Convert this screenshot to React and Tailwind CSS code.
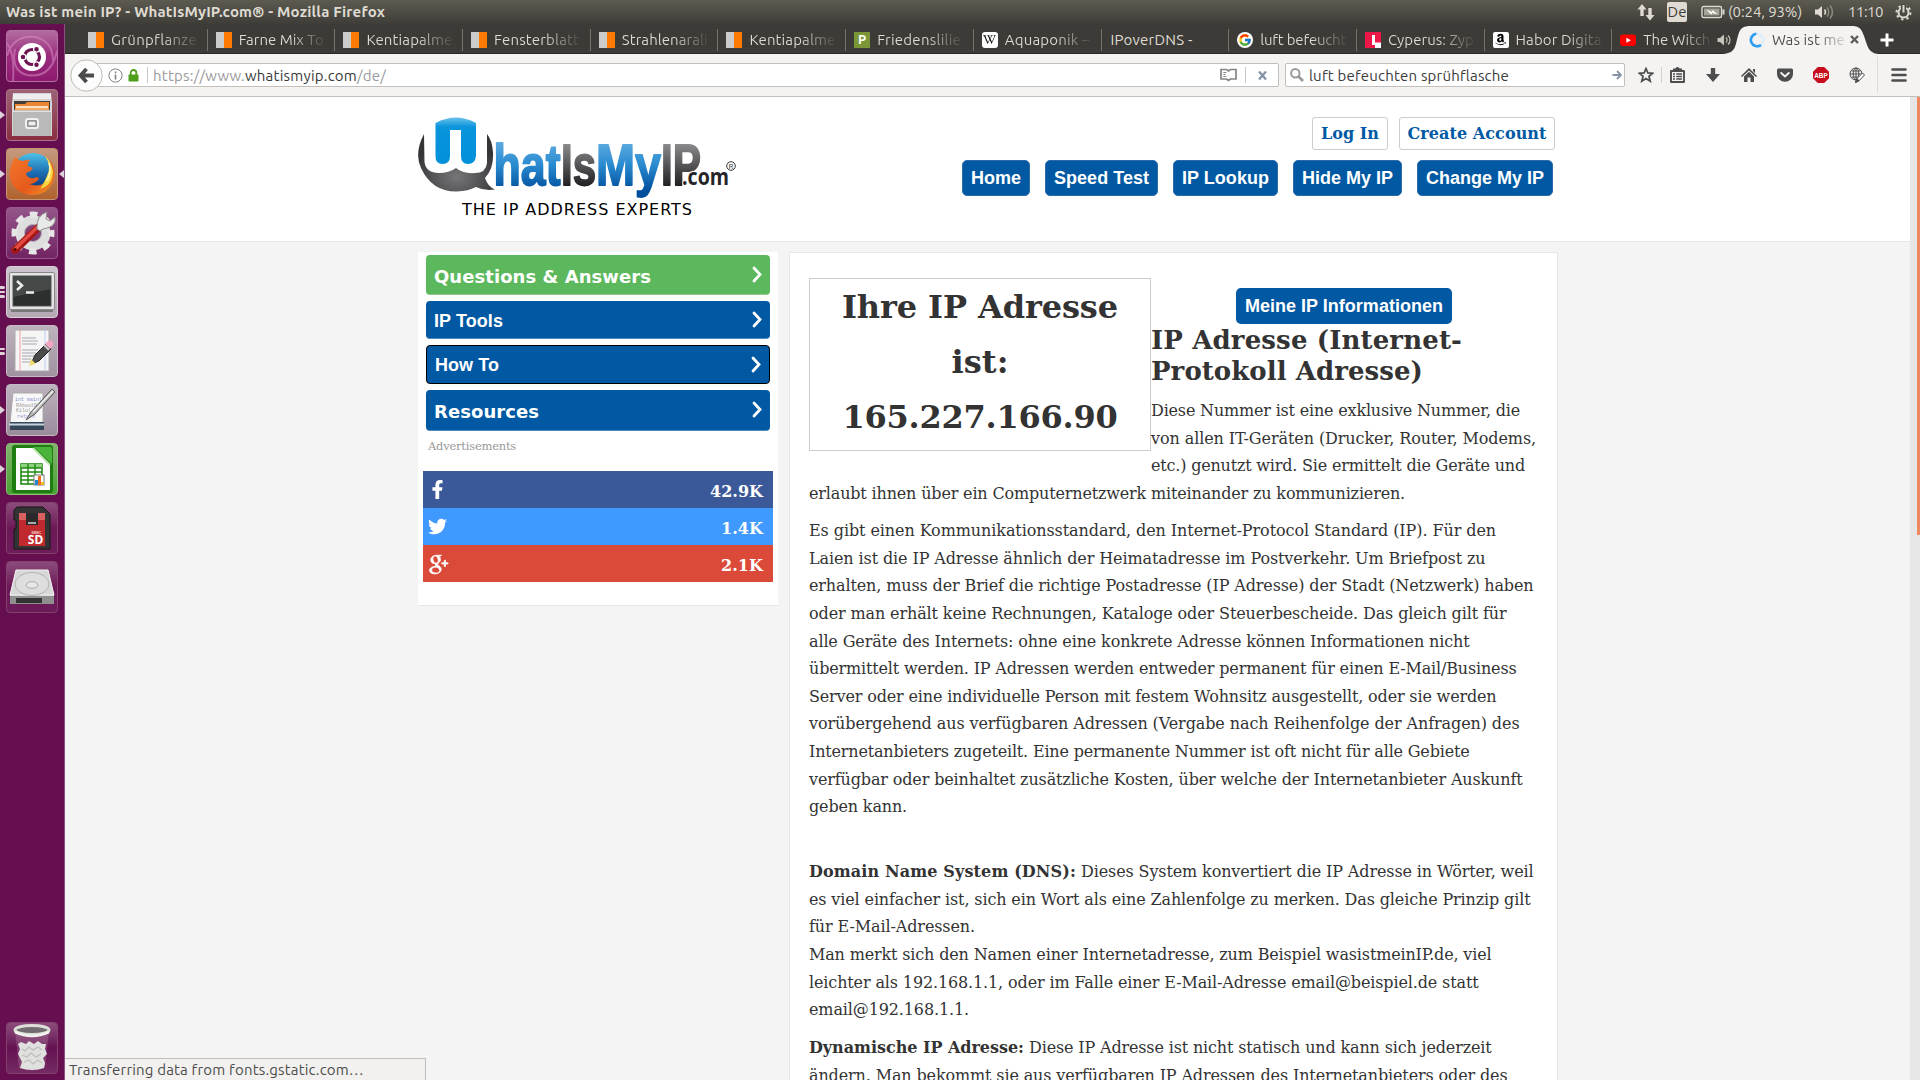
import React, { useRef, useLayoutEffect } from 'react';
import { FaFacebookF, FaTwitter, FaAmazon, FaWikipediaW } from 'react-icons/fa';
import { FcGoogle } from 'react-icons/fc';
import { TiSocialGooglePlus } from 'react-icons/ti';

const UBUNTU = "font-['Ubuntu','Noto_Sans',sans-serif]";
const SERIF = "font-['DejaVu_Serif',serif]";
const SANS = "font-['Liberation_Sans',sans-serif]";
const DEJAVU = "font-['DejaVu_Sans',sans-serif]";

/* Sets a single line of text to the given width by adjusting its tracking. */
function Fit({ w, className = '', children }) {
  const ref = useRef(null);
  useLayoutEffect(() => {
    const el = ref.current;
    el.style.letterSpacing = '0px';
    const natural = el.getBoundingClientRect().width;
    el.style.letterSpacing = `${(w - natural) / el.textContent.length}px`;
  }, [w]);
  return (
    <span ref={ref} className={`inline-block whitespace-nowrap ${className}`}>
      {children}
    </span>
  );
}

function Lines({ rows, className = '' }) {
  return (
    <p className={className}>
      {rows.map(([w, text, bold, boldWidth]) => (
        <span key={text} className="flex h-[27.65px]">
          {bold && <Fit w={boldWidth} className="mr-[5px] font-bold">{bold}</Fit>}
          <Fit w={bold ? w - boldWidth - 5 : w}>{text}</Fit>
        </span>
      ))}
    </p>
  );
}

/* ---------- top panel ---------- */
function TopPanel() {
  return (
    <header className={`flex h-6 items-center justify-between bg-linear-to-b from-[#5d5b50] to-[#3e3d38] pl-1.5 pr-2 text-[15px] leading-6 text-[#dfdbd2] ${UBUNTU}`}>
      <Fit w={379} className="font-bold">Was ist mein IP? - WhatIsMyIP.com® - Mozilla Firefox</Fit>
      <div className="flex items-center">
        <svg width="18" height="20" viewBox="0 0 18 20" fill="#dfdbd2" className="mr-[12px]">
          <path d="M5 2 L9.500 7.500 H6.700 V14 H3.300 V7.500 H0.500z M13 18.500 L8.500 13 H11.300 V6 H14.700 V13 H17.500z" />
        </svg>
        <span className="mr-[14px] flex h-5 w-5 items-center justify-center rounded-[2px] bg-[#dfdbd2] text-[15px] text-[#3c3b37]">De</span>
        <svg width="24" height="14" viewBox="0 0 24 14" className="mr-[3px]">
          <rect x="1" y="1.5" width="19.5" height="11" rx="1.5" fill="none" stroke="#dfdbd2" strokeWidth="1.4" />
          <rect x="3" y="3.5" width="15.5" height="7" fill="#a5a297" />
          <rect x="21.5" y="4.5" width="2" height="5" fill="#dfdbd2" />
          <path d="M5 4.5 L11 7 L11.5 5 L17 9.5 L11 7.8 L10.5 9.8z" fill="#fff" />
        </svg>
        <Fit w={74} className="mr-3">(0:24, 93%)</Fit>
        <svg width="22" height="16" viewBox="0 0 22 16" className="mr-3">
          <path d="M1 5.5 H4 L8 2 V14 L4 10.5 H1z" fill="#dfdbd2" />
          <path d="M10.5 5.5 a4 4 0 0 1 0 5" stroke="#dfdbd2" strokeWidth="1.5" fill="none" />
          <path d="M13 3.5 a7 7 0 0 1 0 9 M16 1.5 a10 10 0 0 1 0 13" stroke="#8f8c82" strokeWidth="1.5" fill="none" />
        </svg>
        <Fit w={35} className="mr-3">11:10</Fit>
        <svg width="17" height="17" viewBox="0 0 17 17" fill="none" stroke="#dfdbd2">
          <circle cx="8.5" cy="8.5" r="5" strokeWidth="2" />
          <circle cx="8.5" cy="8.5" r="7" strokeWidth="2" strokeDasharray="2.4 3.1" />
          <path d="M8.5 0 V8" stroke="#4a4943" strokeWidth="5" />
          <path d="M8.5 1 V8.5" strokeWidth="2" />
        </svg>
      </div>
    </header>
  );
}

/* ---------- tabs ---------- */
const Split = () => (
  <span className="flex h-4 w-4 shrink-0"><i className="w-2 bg-[#cbcbcb]" /><i className="w-2 bg-[#ff7a00]" /></span>
);
const P = () => <span className="flex h-4 w-4 shrink-0 items-center justify-center bg-[#7b9636] text-[13px] font-bold text-white">P</span>;
const Wiki = () => <span className="flex h-4 w-4 shrink-0 items-center justify-center rounded-[3px] bg-white text-black"><FaWikipediaW size={13} /></span>;
const Goog = () => <span className="flex h-4 w-4 shrink-0 items-center justify-center rounded-full bg-white"><FcGoogle size={14} /></span>;
const Ell = () => (
  <svg width="16" height="16" className="shrink-0"><rect width="16" height="16" fill="#ed1748" /><path d="M7 3 h3 v7.500 h6 V16 h-6 v-3 H7z" fill="#fff" /></svg>
);
const Amz = () => <span className="flex h-4 w-4 shrink-0 items-center justify-center rounded-[2px] bg-white text-black"><FaAmazon size={13} /></span>;
const Yt = () => (
  <svg width="16" height="16" className="shrink-0"><rect y="2.5" width="16" height="11.5" rx="3" fill="#f00" /><path d="M6.3 5.7 L11 8.2 L6.3 10.8z" fill="#fff" /></svg>
);

const TABS = [
  [Split, 'Grünpflanze', 86], [Split, 'Farne Mix To', 85], [Split, 'Kentiapalme', 86], [Split, 'Fensterblatt', 85],
  [Split, 'Strahlenarali', 86], [Split, 'Kentiapalme', 86], [P, 'Friedenslilie', 84], [Wiki, 'Aquaponik –', 85],
  [null, 'IPoverDNS -', 82], [Goog, 'luft befeucht', 86], [Ell, 'Cyperus: Zyp', 86], [Amz, 'Habor Digita', 86], [Yt, 'The Witch', 67],
];

function TabBar() {
  return (
    <div className={`flex h-[30px] border-b border-[#2a2925] bg-[#3c3b37] pl-[15px] text-[15px] text-[#dfdbd2] ${UBUNTU}`}>
      {TABS.map(([Icon, label, w], i) => (
        <div key={i} className="flex h-[29px] w-[127.7px] shrink-0 items-center pl-[8px] pt-[2px]">
          {Icon && <Icon />}
          <span className={Icon ? 'ml-[7px] w-[86px] overflow-hidden leading-[22px]' : 'ml-px w-[100px] overflow-hidden leading-[22px]'}>
            <Fit
              w={w}
              className={label === 'IPoverDNS -' ? '' : 'bg-linear-to-r from-[#dfdbd2] from-60% to-[#4a4944] bg-clip-text text-transparent'}
            >
              {label}
            </Fit>
          </span>
          {i < 12 && <i className="ml-auto h-[22px] w-px bg-[#76746c]" />}
          {i === 12 && (
            <svg width="15" height="14" viewBox="0 0 15 14" className="-ml-[12px] shrink-0">
              <path d="M0.5 5 H3 L7 1.5 V12.5 L3 9 H0.5z" fill="#c8c4bb" />
              <path d="M9 4.5 a3.5 3.5 0 0 1 0 5 M11 2.5 a6 6 0 0 1 0 9" stroke="#c8c4bb" strokeWidth="1.2" fill="none" />
            </svg>
          )}
        </div>
      ))}
      <div className="relative -ml-[12px] flex h-[30px] w-[150px] shrink-0 items-center pl-[21px] pt-px text-[#4c4c4c]">
        <svg width="156" height="30" viewBox="0 0 156 30" className="absolute -left-[5px] top-0">
          <path d="M0 30 C13 29 12 22 15 12 C17 4 20 2 28 2 H128 C136 2 138 4 141 12 C145 23 145 29 156 30z" fill="#f4f3f2" />
        </svg>
        <svg width="16" height="16" viewBox="0 0 16 16" className="relative shrink-0" fill="none" strokeWidth="2.6">
          <circle cx="8" cy="8" r="6.3" stroke="#b9dbf7" />
          <path d="M8.500 1.700 A6.300 6.300 0 0 1 12 13" stroke="#e4f1fb" />
          <path d="M12 13 A6.300 6.300 0 1 1 7 1.800" stroke="#2f9df0" />
        </svg>
        <span className="relative ml-[7px] w-[73px] overflow-hidden leading-[22px]">
          <Fit w={73} className="bg-linear-to-r from-[#4c4c4c] from-60% to-[#dcdbda] bg-clip-text text-transparent">Was ist me</Fit>
        </span>
        <svg width="9" height="9" viewBox="0 0 9 9" className="relative ml-[5px]" stroke="#5c5c5c" strokeWidth="2.4"><path d="M1 1 L8 8 M8 1 L1 8" /></svg>
      </div>
      <svg width="14" height="14" viewBox="0 0 14 14" className="ml-[2px] mt-[9px] shrink-0" stroke="#fff" strokeWidth="3"><path d="M7 0.5 V13.5 M0.5 7 H13.5" /></svg>
    </div>
  );
}

/* ---------- navigation toolbar ---------- */
function Toolbar() {
  return (
    <div className={`flex h-[43px] items-center border-b border-[#c4bfb8] bg-[#f4f3f2] pl-[4px] text-[15px] ${UBUNTU}`}>
      <svg width="33" height="33" viewBox="0 0 33 33" className="relative z-10 ml-px shrink-0">
        <circle cx="16.5" cy="16.5" r="15.7" fill="#fcfcfc" stroke="#bdbab6" />
        <path d="M24 16.5 H12 M16.5 10 L10.500 16.500 L16.5 23" stroke="#4a4a4a" strokeWidth="3.800" fill="none" />
      </svg>
      <div className="-ml-[7px] flex h-6 w-[1183px] shrink-0 items-center rounded-r-[2px] border border-[#c3c0bb] bg-white pl-[11px] leading-[22px]">
        <svg width="15" height="15" viewBox="0 0 15 15" fill="none" stroke="#808080" className="shrink-0">
          <circle cx="7.5" cy="7.5" r="6.6" /><path d="M7.5 6.5 V11.5 M7.5 3.5 V5.2" strokeWidth="1.6" />
        </svg>
        <svg width="11" height="13" viewBox="0 0 11 13" className="ml-[5px] shrink-0">
          <rect x="0.5" y="5.5" width="10" height="7" rx="0.8" fill="#4f9e1c" />
          <path d="M2.7 6 V3.8 a2.8 2.8 0 0 1 5.6 0 V6" fill="none" stroke="#4f9e1c" strokeWidth="1.8" />
        </svg>
        <i className="ml-2 mr-[5px] h-4 w-px bg-[#c8c8c8]" />
        <Fit w={233} className="pt-px text-[#9a9a9a]">https://www.<span className="text-[#3a3a3a]">whatismyip.com</span>/de/</Fit>
        <div className="ml-auto flex items-center">
          <svg width="17" height="14" viewBox="0 0 17 14" fill="none" stroke="#858585" strokeWidth="1.7" className="mr-2">
            <path d="M1 1.5 H6.500 L8.5 3 L10.500 1.5 H16 V11 H10.5 L8.5 12.500 L6.5 11 H1z" /><path d="M3.300 4.500 h3 M3.300 6.500 h2.200 M3.300 8.500 h3 M8.500 11 v2" strokeWidth="1.1" />
          </svg>
          <i className="mr-3 h-4 w-px bg-[#c8c8c8]" />
          <svg width="9" height="9" viewBox="0 0 9 9" stroke="#8693a5" strokeWidth="2.3" className="mr-[11px]"><path d="M1 0.5 L8 8.5 M8 0.5 L1 8.5" /></svg>
        </div>
      </div>
      <div className="ml-[6px] flex h-6 w-[340px] shrink-0 items-center rounded-[2px] border border-[#c3c0bb] bg-white pl-[4px] leading-[22px] text-[#3a3a3a]">
        <svg width="14" height="14" viewBox="0 0 14 14" fill="none" stroke="#999" strokeWidth="2"><circle cx="5.3" cy="5.3" r="4.2" /><path d="M8.5 8.5 L13 13" strokeWidth="2.6" /></svg>
        <Fit w={200} className="ml-[5px] pt-px">luft befeuchten sprühflasche</Fit>
        <svg width="10" height="10" viewBox="0 0 10 10" fill="none" stroke="#8693a5" strokeWidth="1.8" className="ml-auto mr-[2px]"><path d="M0.5 5 H8 M5 1 L9 5 L5 9" /></svg>
      </div>
      <div className="ml-[13px] flex items-center text-[#4d4d4d]">
        <svg width="16" height="16" viewBox="0 0 16 16" fill="none" stroke="currentColor" strokeWidth="1.8"><path d="M8 1.6 L9.9 6 L14.6 6.3 L11 9.4 L12.2 14.2 L8 11.6 L3.8 14.2 L5 9.4 L1.4 6.3 L6.1 6z" /></svg>
        <i className="ml-[7px] mr-2 h-4 w-px bg-[#d2d0cc]" />
        <svg width="15" height="16" viewBox="0 0 15 16" fill="none" stroke="currentColor" strokeWidth="1.9"><path d="M1 4 H14 V15 H1z" strokeLinejoin="round" /><path d="M4 4 V2.500 H5.500 L7.500 0.800 L9.500 2.500 H11 V4" fill="currentColor" /><path d="M3 7 h2 M6.300 7 h5.700 M3 9.500 h2 M6.300 9.500 h5.700 M3 12 h2 M6.300 12 h5.700" strokeWidth="1.300" /></svg>
        <svg width="14" height="14" viewBox="0 0 14 14" fill="currentColor" className="ml-[21px]"><path d="M4.8 0 H9.2 V6 H14 L7 14 L0 6 H4.8z" /></svg>
        <svg width="16" height="14" viewBox="0 0 16 14" className="ml-[21px]" fill="currentColor"><path d="M8 0 L16 8 L15 9 L8 2.4 L1 9 L0 8z M3 8.5 L8 3.8 L13 8.5 V14 H9.5 V9.5 H6.5 V14 H3z M12 1 h2 v4 l-2 -2z" /></svg>
        <svg width="16" height="14" viewBox="0 0 16 14" className="ml-5"><path d="M1.5 0.5 H14.5 Q16 0.5 16 2 V6 A8 7.8 0 0 1 0 6 V2 Q0 .5 1.5 .5z" fill="currentColor" /><path d="M4.2 5 L8 8.5 L11.8 5" fill="none" stroke="#f4f3f2" strokeWidth="2" strokeLinecap="round" /></svg>
        <svg width="16" height="16" viewBox="0 0 16 16" className="ml-5"><path d="M4.8 0 H11.2 L16 4.8 V11.2 L11.2 16 H4.8 L0 11.2 V4.8z" fill="#c70d1e" /><text x="8" y="10.8" fontSize="7.5" fontWeight="bold" fill="#fff" textAnchor="middle" textLength="13.5" lengthAdjust="spacingAndGlyphs" fontFamily="Liberation Sans">ABP</text></svg>
        <svg width="16" height="16" viewBox="0 0 16 16" className="ml-5" fill="none" stroke="currentColor" strokeWidth="1"><circle cx="7" cy="7" r="6" /><ellipse cx="7" cy="7" rx="2.8" ry="6" /><path d="M1 7 H13 M2.500 4 H11.500 M2.5 10 H10 M7 1 V13" /><path d="M6.500 15.500 L8 11.5 L13.5 6 L15.5 8 L10 13.8z" fill="#fff" stroke="#4d4d4d" /><path d="M6.500 15.500 L8 11.500 L10 13.800z" fill="#4d4d4d" /></svg>
        <i className="ml-3 mr-[13px] h-9 w-px bg-[#dedcd9]" />
        <svg width="16" height="14" viewBox="0 0 16 14" stroke="currentColor" strokeWidth="2.6" strokeLinecap="round"><path d="M1.5 1.5 H14.5 M1.5 7 H14.5 M1.5 12.5 H14.5" /></svg>
      </div>
    </div>
  );
}

/* ---------- launcher ---------- */
const tileBase = 'relative flex h-[52px] w-[52px] shrink-0 items-center justify-center rounded-[4px] border bg-linear-to-b';

const DashIcon = () => (
  <svg width="50" height="50" viewBox="0 0 50 50">
    <path d="M0 25 Q6 4 28 6 Q46 10 46 30 M6 50 Q8 22 0 12 M50 20 Q44 48 20 44 Q4 40 8 18" stroke="#d88ac4" strokeWidth="2" fill="none" opacity=".55" />
    <circle cx="25" cy="26" r="14" fill="#fff" />
    <circle cx="25" cy="26" r="7.5" fill="none" stroke="#6d1252" strokeWidth="3.2" />
    <g fill="#6d1252" stroke="#fff" strokeWidth="1.3"><circle cx="16" cy="26" r="2.9" /><circle cx="29.5" cy="18.2" r="2.9" /><circle cx="29.5" cy="33.8" r="2.9" /></g>
  </svg>
);
const FilesIcon = () => (
  <svg width="42" height="44" viewBox="0 0 42 44">
    <path d="M2 0 H40 L41 10 V43 H1 V10z" fill="#d4d4d4" /><path d="M2 1 H40 V6 H2z" fill="#eee" />
    <rect x="3" y="8" width="36" height="12" fill="#403c38" /><path d="M4 16 V11 H14 L16 9 H38 V16z" fill="#e98533" /><path d="M5 14 H37" stroke="#fff" strokeWidth="1.5" /><path d="M4 16 H38" stroke="#f7a95d" strokeWidth="2" />
    <rect x="2" y="18" width="38" height="25" fill="#b9b9b9" /><path d="M2 18 H40" stroke="#ececec" strokeWidth="1.5" />
    <rect x="15" y="26" width="12" height="9" rx="2" fill="#b1b1b1" stroke="#f0f0f0" strokeWidth="2" /><rect x="17" y="28" width="8" height="5" fill="#eee" stroke="#777" />
  </svg>
);
const FirefoxIcon = () => (
  <svg width="46" height="46" viewBox="0 0 46 46">
    <defs>
      <linearGradient id="ffSea" x1="0" y1="0" x2="0" y2="1"><stop offset="0" stopColor="#4cc1e8" /><stop offset=".5" stopColor="#1b6cb2" /><stop offset="1" stopColor="#0d2b61" /></linearGradient>
      <linearGradient id="ffFox" x1="0" y1="0" x2="1" y2="1"><stop offset="0" stopColor="#f3762b" /><stop offset=".6" stopColor="#e65a1c" /><stop offset="1" stopColor="#f59a25" /></linearGradient>
    </defs>
    <circle cx="24" cy="22" r="20" fill="url(#ffSea)" />
    <path d="M6 6 Q9 9 14 10 Q18 8 21 9 Q18 12 19 15 L24 17 Q22 21 17 22 Q18 28 25 27 Q29 25 30 28 Q26 33 20 33 Q34 38 40 26 Q43 17 41 9 Q49 22 43 33 Q36 45 22 44 Q4 42 1 26 Q0 16 6 6z" fill="url(#ffFox)" />
    <path d="M36 5 Q43 15 38 25 Q34 34 31 38 Q44 34 44 20 Q42 10 36 5z" fill="#fbd63f" />
    <path d="M40 12 Q43 20 38 30" stroke="#fff4b0" strokeWidth="1.6" fill="none" />
  </svg>
);
const SettingsIcon = () => (
  <svg width="48" height="48" viewBox="0 0 48 48">
    <circle cx="25" cy="24" r="13" fill="none" stroke="#dedede" strokeWidth="9" />
    <circle cx="25" cy="24" r="18.500" fill="none" stroke="#e6e6e6" strokeWidth="6" strokeDasharray="7.500 7.030" strokeDashoffset="3.700" />
    <circle cx="25" cy="24" r="8.500" fill="none" stroke="#b0b0b0" strokeWidth="1" />
    <path d="M7 41 L31 18" stroke="#a81717" strokeWidth="7.500" strokeLinecap="round" /><path d="M7 40 L29 18.500" stroke="#e34a42" strokeWidth="3.500" strokeLinecap="round" />
    <path d="M29 20 Q28 6 39 3 L38 10 L42 12 L47 8 Q49 18 35 20 L32 22z" fill="#e9e9e9" stroke="#8a8a8a" />
    <circle cx="7" cy="40.5" r="1.6" fill="#4d0808" />
  </svg>
);
const TerminalIcon = () => (
  <svg width="46" height="40" viewBox="0 0 46 40">
    <rect x="0.5" y="0.5" width="45" height="37" rx="1.5" fill="#e4e4e4" stroke="#888" /><path d="M2 39 H44" stroke="#777" strokeWidth="2" />
    <rect x="4" y="4" width="38" height="30" fill="#2b2f2e" stroke="#555" /><path d="M4 4 H42 V17 L4 25z" fill="#454a48" />
    <path d="M8 9 L13 13.5 L8 18 M17 20.5 H25" stroke="#eee" strokeWidth="2.5" fill="none" />
  </svg>
);
const GeditIcon = () => (
  <svg width="46" height="46" viewBox="0 0 46 46">
    <rect x="6" y="2" width="34" height="41" fill="#f5f5f5" stroke="#aaa" />
    <path d="M11 2 V43" stroke="#f0a0a0" /><path d="M36 2 V43" stroke="#b9cdf0" />
    <path d="M13 10 H27 M13 13 H29 M13 16 H28 M13 22 H29 M13 25 H27 M13 28 H25 M13 31 H22 M13 34 H28" stroke="#a6a6b2" />
    <path d="M22 36 L26 27 L37 16 L42 21 L30 33z" fill="#4b4b4b" stroke="#222" /><path d="M20 38 L22 31 L27 36z" fill="#f0dc76" /><path d="M36 16 L40 12 Q46 13 44 18 L41 21z" fill="#f3a5c4" /><path d="M35 17 L40 22" stroke="#ccc" strokeWidth="2" />
  </svg>
);
const TexIcon = () => (
  <svg width="50" height="46" viewBox="0 0 50 46">
    <path d="M6 6 H36 V36 H3z" fill="#f8f8f8" stroke="#aaa" /><path d="M3 35 H37 V43 H3z" fill="#364759" /><path d="M2 37.500 H37" stroke="#c4d4df" strokeWidth="2" />
    <g fontFamily="Liberation Mono" fontSize="5" fill="#8793cf"><text x="8" y="14">int main(</text><text x="9" y="19.500" fill="#999">RAboutDa</text><text x="9" y="25" fill="#999">Kilo(</text><text x="10" y="30.500">return</text></g>
    <path d="M19 33 L24 25 L45 2 L48 5 L28 27z" fill="#b6b6b6" stroke="#555" /><path d="M26 25 L46 4" stroke="#f4f4f4" strokeWidth="1.3" />
  </svg>
);
const CalcIcon = () => (
  <svg width="50" height="50" viewBox="0 0 50 50">
    <rect x="5" y="1" width="41" height="48" rx="3" fill="#1e7d10" /><path d="M9 4 H26 L43 21 V46 H9z" fill="#fff" /><path d="M27 3 H43 Q45 3 45 6 V20z" fill="#4cb33b" /><path d="M26 4 L43 21" stroke="#b9e7ac" strokeWidth="2" />
    <rect x="14" y="20" width="21" height="20" fill="#fff" stroke="#208a13" strokeWidth="1.6" /><path d="M14 20 h21 v4 h-21z" fill="#8cd37c" /><path d="M14 24 H35 M14 28 H35 M14 32 H35 M14 36 H35 M21 20 V40 M28 20 V40" stroke="#208a13" strokeWidth="1.4" />
    <rect x="27" y="31" width="10" height="10" fill="#fff" stroke="#777" /><path d="M28 41 v-5 h3 v5z" fill="#2388d5" /><path d="M31 41 v-9 h3 v9z" fill="#eb6d20" /><path d="M34 41 v-3 h3 v3z" fill="#edbf22" />
  </svg>
);
const SdIcon = () => (
  <svg width="38" height="44" viewBox="0 0 38 44">
    <path d="M4 1 H30 L37 8 V43 H1 V23 H3 V14 H1 V4z" fill="#333" stroke="#181818" />
    <rect x="6" y="7" width="26" height="33" fill="#c02a2e" /><rect x="6" y="7" width="26" height="7" fill="#d8605e" /><rect x="13" y="7" width="12" height="12" fill="#2b2b2b" /><path d="M15 17 h8" stroke="#aaa" strokeWidth="2" />
    <text x="23.500" y="27.500" fontSize="4.200" fill="#fff" textAnchor="middle" fontFamily="Liberation Sans">MMC</text>
    <text x="22.5" y="38" fontSize="12" fontWeight="bold" fill="#fff" textAnchor="middle" fontFamily="Noto Sans">SD</text>
  </svg>
);
const DiskIcon = () => (
  <svg width="48" height="38" viewBox="0 0 48 38">
    <path d="M8 2 H40 L46 27 V36 H2 V27z" fill="#cfcfcf" /><path d="M8 2 H40 L46 27 H2z" fill="#d8d8d8" stroke="#f2f2f2" /><path d="M2 28 H46 V36 H2z" fill="#8f8f8f" /><path d="M8 30 H34 V35 H8z" fill="#333" />
    <ellipse cx="24" cy="16" rx="17" ry="11.5" fill="#dedede" stroke="#b3b3b3" /><ellipse cx="24" cy="17" rx="6" ry="3.3" fill="#e8e8e8" stroke="#aaa" />
  </svg>
);
const TrashIcon = () => (
  <svg width="40" height="48" viewBox="0 0 40 48">
    <path d="M3 6 L7 44 Q20 49 33 44 L37 6z" fill="#fff" opacity=".16" />
    <path d="M6 20 L9 18 L14 20 L17 17 L22 20 L26 17 L30 20 L34 20 L33 25 L35 30 L31 34 L33 39 L32 44 Q20 48 8 44 L10 38 L8 34 L6 30 L8 25z" fill="#e0e0de" />
    <path d="M10 25 l3 2 l4 -4 l4 3 l5 -3 l4 3 M10 31 l5 2 l4 -4 l5 4 l5 -3 M12 38 l5 -2 l4 4 l5 -4 l4 3" stroke="#bdbdba" strokeWidth="1.200" fill="none" />
    <ellipse cx="20" cy="6" rx="17" ry="4.500" fill="#716b70" stroke="#deded8" strokeWidth="3" /><path d="M3 8 Q20 16 37 8" stroke="#f2f2ee" strokeWidth="2.500" fill="none" />
  </svg>
);

const TILES = [
  [DashIcon, 'from-[#b26ba0] via-[#9a2a7d] to-[#8d1a70] border-[#b573a5]', 0],
  [FilesIcon, 'from-[#9d6276] to-[#8a2d42] border-[#ad7487]', 1],
  [FirefoxIcon, 'from-[#c49a7e] to-[#b0622c] border-[#c49572]', 1],
  [SettingsIcon, 'from-[#94568a] to-[#722362] border-[#98598c]', 0],
  [TerminalIcon, 'from-[#cdc5cd] to-[#b3a8b3] border-[#d8d0d8]', 3],
  [GeditIcon, 'from-[#bdb3bd] to-[#a092a1] border-[#c4b9c4]', 2],
  [TexIcon, 'from-[#bdb3bd] to-[#9b8c9c] border-[#c4b9c4]', 1],
  [CalcIcon, 'from-[#81b36e] to-[#47a32f] border-[#8cc07a]', 1],
  [SdIcon, 'from-[#8c4b7c] via-[#6c1857] to-[#6c1c59] border-[#84406f]', 0],
  [DiskIcon, 'from-[#8c4b7c] via-[#6c1857] to-[#6c1c59] border-[#84406f]', 0],
];

function Launcher() {
  return (
    <aside className="flex w-[65px] shrink-0 flex-col gap-[7px] border-r border-[#8d4f7d] bg-[#650f50] pb-1.5 pl-1.5 pt-1.5">
      {TILES.map(([Icon, tone, marks], i) => (
        <div key={i} className={`${tileBase} ${tone}`}>
          <Icon />
          {marks === 1 && <svg width="5" height="8" viewBox="0 0 5 8" className="absolute -left-[7px] top-[21px]"><path d="M0 0 L5 4 L0 8z" fill="#ddd2da" /></svg>}
          {marks > 1 && (
            <span className="absolute -left-[7px] top-[19px] flex h-3 flex-col justify-center gap-[2px]">
              {Array.from({ length: marks }, (_, k) => <i key={k} className="h-[2.5px] w-[5px] rounded-r bg-[#ddd2da]" />)}
            </span>
          )}
          {i === 2 && <svg width="5" height="8" viewBox="0 0 5 8" className="absolute -right-[7px] top-[21px]"><path d="M5 0 L0 4 L5 8z" fill="#ddd2da" /></svg>}
        </div>
      ))}
      <div className={`${tileBase} mt-auto border-[#84406f] from-[#8c4b7c] via-[#651052] to-[#742a62]`}><TrashIcon /></div>
    </aside>
  );
}

/* ---------- site ---------- */
function Logo() {
  return (
    <svg width="322" height="84" viewBox="0 0 322 84" className="block">
      <defs>
        <linearGradient id="blue" gradientUnits="userSpaceOnUse" x1="0" y1="26" x2="0" y2="74"><stop offset="0" stopColor="#5aa9e0" /><stop offset=".45" stopColor="#2a8bd0" /><stop offset="1" stopColor="#004f9c" /></linearGradient>
        <linearGradient id="gray" gradientUnits="userSpaceOnUse" x1="0" y1="26" x2="0" y2="68"><stop offset="0" stopColor="#8d8d90" /><stop offset="1" stopColor="#232225" /></linearGradient>
        <radialGradient id="bubble" cx=".5" cy=".75" r=".6"><stop offset="0" stopColor="#767678" /><stop offset="1" stopColor="#343436" /></radialGradient>
        <linearGradient id="cap" x1="0" y1="0" x2="0" y2="1"><stop offset="0" stopColor="#6cc2ea" /><stop offset=".2" stopColor="#0a95dc" /><stop offset="1" stopColor="#0090da" /></linearGradient>
      </defs>
      <path d="M6 17 Q-4 36 3 51 Q14 75 39 74.500 Q50 74 58 70 Q66 74 77 72.500 Q70 70 67 61 Q76 52 75 35 Q74 23 69 17 V46 Q68 56 57 56 Q45 57 38 51 Q31 56 21 56 Q8 56 6.500 45z" fill="url(#bubble)" />
      <path d="M17.500 6 Q38 -5 58 6 V39 Q57 47 50 47 Q43 47 43 39 V13 H32 V39 Q32 47 24.500 47 Q17.500 47 17.500 39z" fill="url(#cap)" />
      <g fontFamily="Liberation Sans" fontWeight="bold" fontSize="57" strokeWidth="1.800" strokeLinejoin="round">
        <text x="75.500" y="67.500" textLength="67" lengthAdjust="spacingAndGlyphs" fill="url(#blue)" stroke="url(#blue)">hat</text>
        <text x="143" y="67.500" textLength="35" lengthAdjust="spacingAndGlyphs" fill="url(#gray)" stroke="url(#gray)">Is</text>
        <text x="178" y="67.500" textLength="65" lengthAdjust="spacingAndGlyphs" fill="url(#blue)" stroke="url(#blue)">My</text>
        <text x="243" y="67.500" textLength="40" lengthAdjust="spacingAndGlyphs" fill="url(#gray)" stroke="url(#gray)">IP</text>
      </g>
      <text x="264" y="68" textLength="47" fontSize="24" fontWeight="bold" fontFamily="Open Sans" fill="#262528" stroke="#fff" strokeWidth="2" paintOrder="stroke" lengthAdjust="spacingAndGlyphs">.com</text>
      <circle cx="313" cy="49" r="4.300" fill="none" stroke="#333" /><text x="313" y="51.500" fontSize="6.500" textAnchor="middle" fontFamily="Liberation Sans" fill="#333">R</text>
    </svg>
  );
}

const NAV = [['Home', 50, 'w-[68px]'], ['Speed Test', 95, 'w-[113px]'], ['IP Lookup', 87, 'w-[105px]'], ['Hide My IP', 91, 'w-[109px]'], ['Change My IP', 118, 'w-[136px]']];

function SiteHeader() {
  return (
    <div className="h-[145px] border-b border-[#e7e7e7] bg-white">
      <div className="ml-[353px] flex w-[1137px] justify-between pt-5">
        <div>
          <Logo />
          <div className={`-mt-px ml-11 leading-5 text-black ${DEJAVU}`}><Fit w={231}>THE IP ADDRESS EXPERTS</Fit></div>
        </div>
        <div className="flex flex-col items-end">
          <div className={`flex gap-[11px] font-bold leading-[31px] text-[#0059a4] ${SERIF}`}>
            <span className="flex h-[33px] w-[76px] justify-center rounded-[3px] border border-[#ccc]"><Fit w={58}>Log In</Fit></span>
            <span className="flex h-[33px] w-[156px] justify-center rounded-[3px] border border-[#ccc]"><Fit w={139}>Create Account</Fit></span>
          </div>
          <nav className={`mr-[2px] mt-2.5 flex gap-[15px] text-[18px] font-bold leading-[34px] text-white ${SANS}`}>
            {NAV.map(([t, w, cls]) => (
              <span key={t} className={`flex h-9 justify-center rounded-[5px] border border-[#2a6ba8] bg-[#0059a2] ${cls}`}><Fit w={w}>{t}</Fit></span>
            ))}
          </nav>
        </div>
      </div>
    </div>
  );
}

const Chevron = () => (
  <svg width="10" height="17" viewBox="0 0 10 17" fill="none" stroke="#fff" strokeWidth="2.800" strokeLinecap="round"><path d="M2 2 L8 8.500 L2 15" /></svg>
);

function SideButton({ w, label, className }) {
  return (
    <div className={`flex w-[344px] justify-between rounded-[4px] text-[18px] font-bold text-white ${className}`}>
      <Fit w={w}>{label}</Fit>
      <Chevron />
    </div>
  );
}

function Sidebar() {
  return (
    <div className="h-[354px] w-[360px] border-b border-[#e7e7e7] bg-white pt-[3px]">
      <div className="ml-2 flex flex-col">
        <SideButton w={217} label="Questions & Answers" className={`h-10 items-start border-b border-[#8bca8a] bg-[#5cb85c] px-2 pt-[11px] leading-[21px] ${DEJAVU} [&>svg]:mt-0`} />
        <SideButton w={69} label="IP Tools" className={`mt-1.5 h-[38px] items-start border-b border-[#4c8abd] bg-[#0059a2] px-2 pt-[10px] leading-[21px] ${SANS} [&>svg]:mt-0`} />
        <SideButton w={64} label="How To" className={`mt-1.5 h-[39px] items-start border border-black bg-[#0059a2] px-2 pt-[9px] leading-[21px] ${SANS} [&>svg]:mt-px`} />
        <SideButton w={105} label="Resources" className={`mt-1.5 h-[41px] items-start border-b border-[#4c8abd] bg-[#0059a2] px-2 pt-[11px] leading-[21px] ${DEJAVU} [&>svg]:mt-0`} />
      </div>
      <div className={`ml-2.5 mt-[6px] h-[34px] text-[11.500px] leading-[18px] text-[#999] ${SERIF}`}><Fit w={88}>Advertisements</Fit></div>
      <div className={`ml-[5px] w-[350px] font-bold text-white ${SERIF}`}>
        <div className="flex h-[37px] items-center justify-between bg-[#3b5998] pl-[5px] pr-[10px]"><FaFacebookF size={19} /><Fit w={53} className="pt-1">42.9K</Fit></div>
        <div className="flex h-[37px] items-center justify-between bg-[#4099ff] pl-[5px] pr-[10px]"><FaTwitter size={19} /><Fit w={42} className="pt-1">1.4K</Fit></div>
        <div className="flex h-[37px] items-center justify-between bg-[#db4a39] pr-[10px]"><TiSocialGooglePlus size={30} className="stroke-white stroke-[0.6]" /><Fit w={42} className="pt-1">2.1K</Fit></div>
      </div>
    </div>
  );
}

const P1 = [[369, 'Diese Nummer ist eine exklusive Nummer, die'], [385, 'von allen IT-Geräten (Drucker, Router, Modems,'], [374, 'etc.) genutzt wird. Sie ermittelt die Geräte und']];
const P2 = [
  [687, 'Es gibt einen Kommunikationsstandard, den Internet-Protocol Standard (IP). Für den'],
  [676.5, 'Laien ist die IP Adresse ähnlich der Heimatadresse im Postverkehr. Um Briefpost zu'],
  [724.5, 'erhalten, muss der Brief die richtige Postadresse (IP Adresse) der Stadt (Netzwerk) haben'],
  [697.5, 'oder man erhält keine Rechnungen, Kataloge oder Steuerbescheide. Das gleich gilt für'],
  [660.5, 'alle Geräte des Internets: ohne eine konkrete Adresse können Informationen nicht'],
  [707.5, 'übermittelt werden. IP Adressen werden entweder permanent für einen E-Mail/Business'],
  [687.5, 'Server oder eine individuelle Person mit festem Wohnsitz ausgestellt, oder sie werden'],
  [710.5, 'vorübergehend aus verfügbaren Adressen (Vergabe nach Reihenfolge der Anfragen) des'],
  [660.5, 'Internetanbieters zugeteilt. Eine permanente Nummer ist oft nicht für alle Gebiete'],
  [713.5, 'verfügbar oder beinhaltet zusätzliche Kosten, über welche der Internetanbieter Auskunft'],
  [98, 'geben kann.'],
];
const P3 = [
  [724.5, 'Dieses System konvertiert die IP Adresse in Wörter, weil', 'Domain Name System (DNS):', 267],
  [721.5, 'es viel einfacher ist, sich ein Wort als eine Zahlenfolge zu merken. Das gleiche Prinzip gilt'],
  [166, 'für E-Mail-Adressen.'],
  [682.5, 'Man merkt sich den Namen einer Internetadresse, zum Beispiel wasistmeinIP.de, viel'],
  [669.5, 'leichter als 192.168.1.1, oder im Falle einer E-Mail-Adresse email@beispiel.de statt'],
  [160, 'email@192.168.1.1.'],
];
const P4 = [
  [682.5, 'Diese IP Adresse ist nicht statisch und kann sich jederzeit', 'Dynamische IP Adresse:', 215],
  [698.5, 'ändern. Man bekommt sie aus verfügbaren IP Adressen des Internetanbieters oder des'],
];

function Article() {
  return (
    <article className={`ml-[10.500px] h-[828px] w-[769px] overflow-hidden border border-b-0 border-[#e7e7e7] bg-white pl-[19.500px] pt-[25px] text-[16px] leading-[27.65px] text-[#333] ${SERIF}`}>
      <div className="flex">
        <h1 className="h-[173px] w-[342px] shrink-0 border border-[#ccc] pt-px text-center text-[32px] font-bold leading-[55.2px]">
          <Fit w={276}>Ihre IP Adresse</Fit><br /><Fit w={57}>ist:</Fit><br /><Fit w={275}>165.227.166.90</Fit>
        </h1>
        <div className="w-[386px] shrink-0 pt-2.5">
          <div className={`ml-[85px] flex h-9 w-[216px] justify-center rounded-[5px] bg-[#0059a2] text-[18px] font-bold leading-9 text-white ${SANS}`}><Fit w={198}>Meine IP Informationen</Fit></div>
          <h2 className="pt-px text-[26px] font-bold leading-[31.2px]"><Fit w={311}>IP Adresse (Internet-</Fit><br /><Fit w={272}>Protokoll Adresse)</Fit></h2>
          <Lines rows={P1} className="mt-[9.5px]" />
        </div>
      </div>
      <Lines rows={[[596, 'erlaubt ihnen über ein Computernetzwerk miteinander zu kommunizieren.']]} />
      <Lines rows={P2} className="mt-[9.5px]" />
      <Lines rows={P3} className="mt-[37px]" />
      <Lines rows={P4} className="mt-2.5" />
    </article>
  );
}

export default function App() {
  return (
    <div className="flex h-[1080px] w-[1920px] flex-col overflow-hidden">
      <TopPanel />
      <div className="flex min-h-0 flex-1">
        <Launcher />
        <div className="flex min-w-0 flex-1 flex-col">
          <TabBar />
          <Toolbar />
          <div className="relative flex min-h-0 flex-1">
            <main className="flex w-[1845px] flex-col overflow-hidden bg-[#f4f4f4]">
              <SiteHeader />
              <div className="ml-[353px] flex items-start pt-2.5">
                <Sidebar />
                <Article />
              </div>
            </main>
            <div className="flex flex-1 justify-end bg-[#e6e6e6]"><i className="h-[438px] w-[3px] bg-[#f08763]" /></div>
            <div className={`absolute bottom-0 left-0 h-[22px] w-[361px] border-r border-t border-[#c0bdb8] bg-[#f2f1f0] pl-1 text-[15px] leading-[22px] text-[#4c4c4c] ${UBUNTU}`}><Fit w={295}>Transferring data from fonts.gstatic.com…</Fit></div>
          </div>
        </div>
      </div>
    </div>
  );
}
